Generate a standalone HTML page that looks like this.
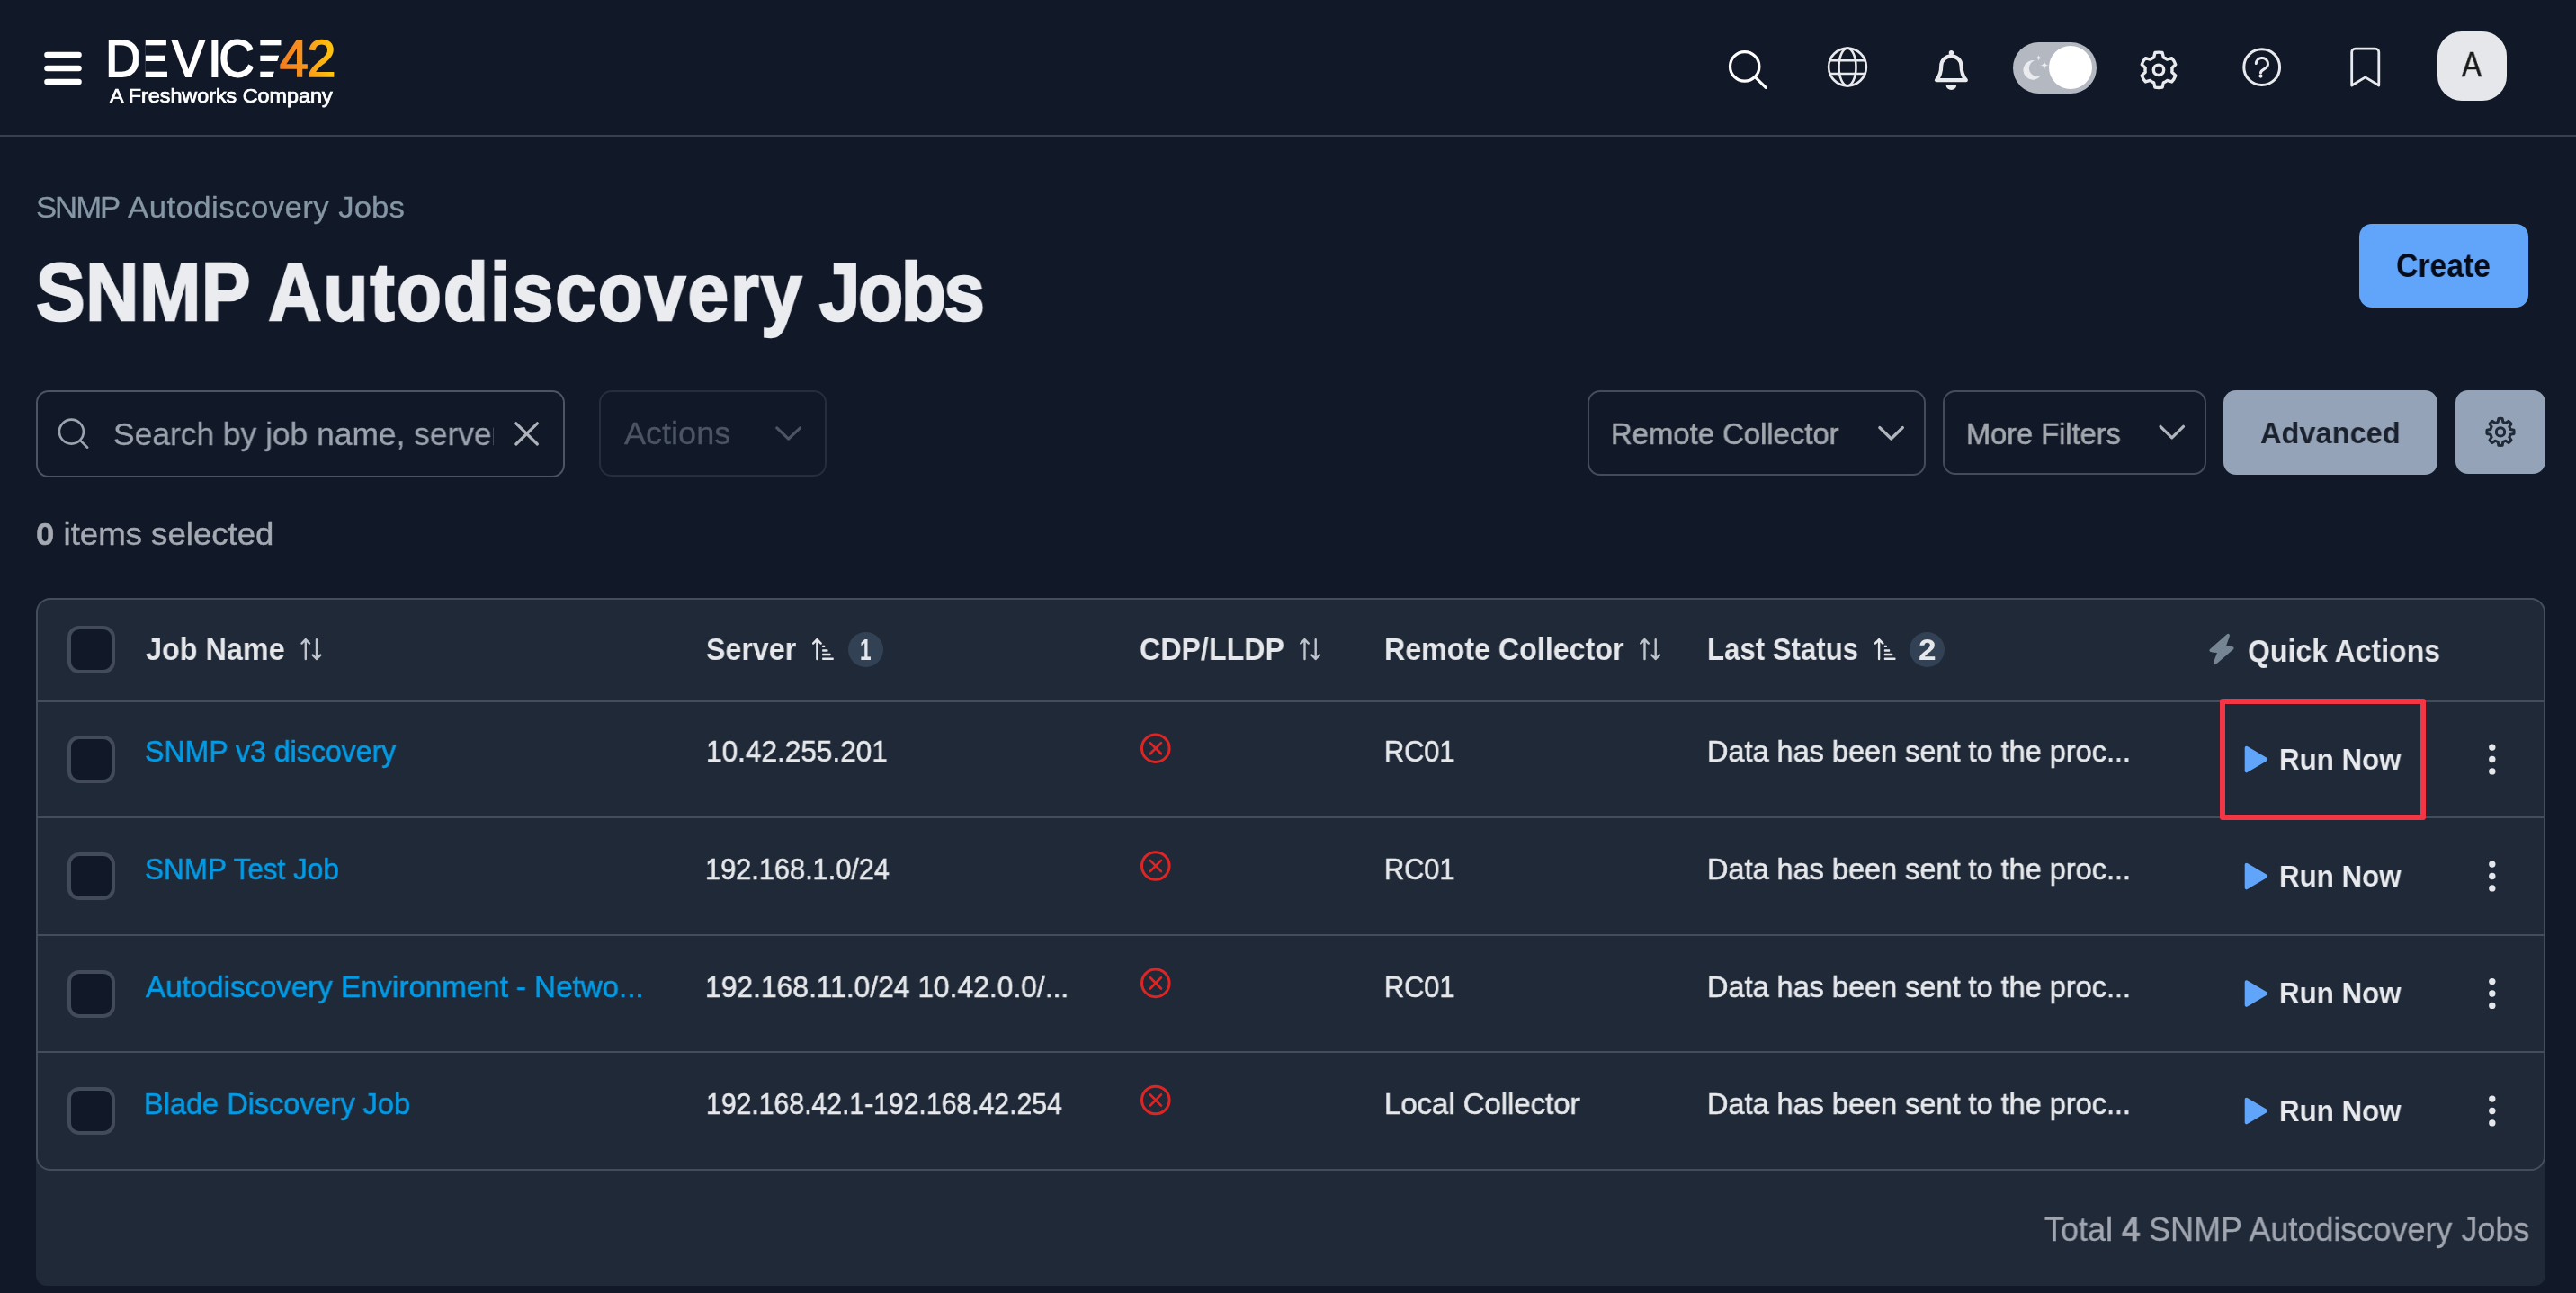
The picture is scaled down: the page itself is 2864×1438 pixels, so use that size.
<!DOCTYPE html>
<html lang="en">
<head>
<meta charset="utf-8">
<title>SNMP Autodiscovery Jobs - Device42</title>
<style>
html,body{margin:0;padding:0}
body{width:2864px;height:1438px;overflow:hidden;background:#111827;font-family:"Liberation Sans",sans-serif;position:relative;color:#e5e7eb}
.t{margin:0;padding:0;text-decoration:none;will-change:transform;position:absolute;white-space:nowrap;line-height:1;transform-origin:0 0;display:block}
.t b{font-weight:700}
.a{position:absolute;box-sizing:border-box}
svg{position:absolute;overflow:visible}
.hdrline{left:0;top:150px;width:2864px;height:2px;background:#393f4d}
.box{border:2px solid #444c5a;border-radius:14px;background:#111827}
.btn{border-radius:14px}
.panel{left:40px;top:665px;width:2790px;height:765px;background:#1f2937;border-radius:16px 16px 12px 12px}
.tbl{left:40px;top:665px;width:2790px;height:637px;border:2px solid #444d5c;border-radius:16px}
.hl{left:42px;width:2786px;height:2px;background:#444d5c}
.cb{left:75px;width:53px;height:53px;border:4px solid #414b5a;border-radius:13px;background:#111827}
.badge{width:39px;height:39px;border-radius:50%;background:#334155}
</style>
</head>
<body>
<header>
<div class="a hdrline"></div>
<!-- hamburger -->
<svg width="60" height="50" style="left:40px;top:50px" viewBox="40 50 60 50"><g stroke="#fff" stroke-width="6.6" stroke-linecap="round"><path d="M52.5 61H87.5M52.5 76H87.5M52.5 91H87.5"/></g></svg>
<svg width="300" height="70" style="left:100px;top:30px" viewBox="100 30 300 70" font-family="Liberation Sans, sans-serif" font-size="57.5"><defs><linearGradient id="lg42" x1="311" y1="0" x2="371" y2="0" gradientUnits="userSpaceOnUse" gradientTransform="scale(1 1)"><stop offset="0" stop-color="#f47a20"/><stop offset="0.45" stop-color="#f7941d"/><stop offset="1" stop-color="#ffc60b"/></linearGradient></defs><text transform="scale(0.95 1)" y="84.9" x="123.31 158.96 201.3 243.49 256.35 293.28" fill="#fff" stroke="#fff" stroke-width="1.9">DEVICE</text><path d="M153.89 38H161.74V92H153.89ZM281.49 38H289.34V92H281.49ZM316.6 40H319V88H302.4Z" fill="#111827"/><text transform="scale(1.0 1)" y="84.9" x="310.69 341.41" fill="url(#lg42)" stroke="url(#lg42)" stroke-width="1.5">42</text></svg>
<div class="a" style="left:2238px;top:47px;width:93px;height:57px;border-radius:29px;background:#b3b8c1"></div>
<div class="a" style="left:2278px;top:51px;width:48px;height:48px;border-radius:50%;background:#fff"></div>
<div class="a" style="left:2710px;top:35px;width:77px;height:76.5px;border-radius:27px;background:#e5e7eb"></div>
<svg width="2864" height="150" style="left:0;top:0" viewBox="0 0 2864 150" fill="none" stroke-linecap="round" stroke-linejoin="round"><g stroke="#fff" stroke-width="3.2"><circle cx="1939.7" cy="73.9" r="16.2"/><path d="M1951.3 85.6L1963.2 97.3"/></g><g stroke="#e8eaee" stroke-width="2.6"><circle cx="2054" cy="74.5" r="20.9"/><ellipse cx="2054" cy="74.5" rx="9.5" ry="20.9"/><path d="M2034.6 67.2H2073.4M2034.6 82H2073.4"/></g><g stroke="#e8eaee" stroke-width="4.2"><path d="M2153 89.2H2185.8C2181.5 84 2180.6 79 2180.6 73.5A11.2 11.2 0 0 0 2158.2 73.5C2158.2 79 2157.3 84 2153 89.2Z"/></g><circle cx="2169.4" cy="58.8" r="2.7" fill="#e8eaee"/><path d="M2163.6 94.4H2175.2A5.8 5.6 0 0 1 2163.6 94.4Z" fill="#e8eaee"/><path d="M2261.8 67.2A10.8 10.8 0 1 0 2268.6 84.6A9.2 9.2 0 0 1 2261.8 67.2Z" fill="#e9ebef"/><path d="M2266.6 60.5Q2266.6 64.3 2270.4 64.3Q2266.6 64.3 2266.6 68.1Q2266.6 64.3 2262.8 64.3Q2266.6 64.3 2266.6 60.5Z" fill="#e9ebef"/><path d="M2273 67.2Q2273 72.6 2278.4 72.6Q2273 72.6 2273 78Q2273 72.6 2267.6 72.6Q2273 72.6 2273 67.2Z" fill="#e9ebef"/><g stroke="#e8eaee" stroke-width="3.4"><path d="M2405.38 63.8L2404.1 58.53A19.7 19.7 0 0 0 2395.9 58.53L2394.62 63.8A15 15 0 0 0 2390.56 66.14L2385.36 64.62A19.7 19.7 0 0 0 2381.26 71.71L2385.18 75.45A15 15 0 0 0 2385.18 80.15L2381.26 83.89A19.7 19.7 0 0 0 2385.36 90.98L2390.56 89.46A15 15 0 0 0 2394.62 91.8L2395.9 97.07A19.7 19.7 0 0 0 2404.1 97.07L2405.38 91.8A15 15 0 0 0 2409.44 89.46L2414.64 90.98A19.7 19.7 0 0 0 2418.74 83.89L2414.82 80.15A15 15 0 0 0 2414.82 75.45L2418.74 71.71A19.7 19.7 0 0 0 2414.64 64.62L2409.44 66.14A15 15 0 0 0 2405.38 63.8Z"/><circle cx="2400" cy="77.8" r="5.7"/></g><g stroke="#e8eaee" stroke-width="3"><circle cx="2514.7" cy="74.7" r="19.9"/><path d="M2508.3 70.6A6.6 6.3 0 1 1 2517.6 76.6C2514.6 78.3 2513.5 79.2 2513.5 81"/></g><circle cx="2513.5" cy="84.6" r="2.1" fill="#e8eaee"/><path d="M2614.7 95V58.1A4 4 0 0 1 2618.7 54.1H2640.8A4 4 0 0 1 2644.8 58.1V95L2629.75 85.9Z" stroke="#e8eaee" stroke-width="2.8" stroke-linejoin="round"/></svg>
</header>
<main>
<div class="a btn" style="left:2623px;top:249px;width:188px;height:93px;background:#60a5fa"></div>
<div class="a box" style="left:40px;top:434px;width:588px;height:97px;border-color:#4b5563"></div>
<div class="a box" style="left:666px;top:434px;width:253px;height:96px;border-color:#252e3d"></div>
<div class="a box" style="left:1765px;top:434px;width:376px;height:95px"></div>
<div class="a box" style="left:2160px;top:434px;width:293px;height:93.5px"></div>
<div class="a btn" style="left:2472px;top:434px;width:238px;height:94px;background:#94a3b8"></div>
<div class="a btn" style="left:2730px;top:434px;width:100px;height:93.3px;background:#94a3b8"></div>
<svg width="2864" height="120" style="left:0;top:420px" viewBox="0 420 2864 120" fill="none" stroke-linecap="round" stroke-linejoin="round"><g stroke="#9ca3af" stroke-width="2.6"><circle cx="79.4" cy="480.1" r="13.5"/><path d="M89.2 489.8L97.2 497.7"/></g><path d="M573.8 470.8L597.4 494M597.4 470.8L573.8 494" stroke="#aeb2ba" stroke-width="3.2"/><path d="M863.7 475.9L876.65 488.1L889.6 475.9" stroke="#4b5563" stroke-width="3.2"/><path d="M2089.8 475.5L2102.6 488L2115.4 475.5" stroke="#b0b4bb" stroke-width="3.2"/><path d="M2402 474.3L2414.75 486.9L2427.5 474.3" stroke="#b0b4bb" stroke-width="3.2"/><g stroke="#1f2937" stroke-width="3"><path d="M2782.85 469.36L2782.1 465.45A15.1 15.1 0 0 0 2777.9 465.45L2777.15 469.36A11.4 11.4 0 0 0 2774.21 470.58L2770.91 468.34A15.1 15.1 0 0 0 2767.94 471.31L2770.18 474.61A11.4 11.4 0 0 0 2768.96 477.55L2765.05 478.3A15.1 15.1 0 0 0 2765.05 482.5L2768.96 483.25A11.4 11.4 0 0 0 2770.18 486.19L2767.94 489.49A15.1 15.1 0 0 0 2770.91 492.46L2774.21 490.22A11.4 11.4 0 0 0 2777.15 491.44L2777.9 495.35A15.1 15.1 0 0 0 2782.1 495.35L2782.85 491.44A11.4 11.4 0 0 0 2785.79 490.22L2789.09 492.46A15.1 15.1 0 0 0 2792.06 489.49L2789.82 486.19A11.4 11.4 0 0 0 2791.04 483.25L2794.95 482.5A15.1 15.1 0 0 0 2794.95 478.3L2791.04 477.55A11.4 11.4 0 0 0 2789.82 474.61L2792.06 471.31A15.1 15.1 0 0 0 2789.09 468.34L2785.79 470.58A11.4 11.4 0 0 0 2782.85 469.36Z"/><circle cx="2780" cy="480.4" r="4.7"/></g></svg>
<div class="a panel"></div>
<div class="a tbl"></div>
<div class="a hl" style="top:779px"></div>
<div class="a hl" style="top:908px"></div>
<div class="a hl" style="top:1039px"></div>
<div class="a hl" style="top:1169px"></div>
<div class="a cb" style="top:696px"></div>
<div class="a cb" style="top:818.0px"></div>
<div class="a cb" style="top:948.0px"></div>
<div class="a cb" style="top:1078.5px"></div>
<div class="a cb" style="top:1209.0px"></div>
<div class="a badge" style="left:943px;top:703px"></div>
<div class="a badge" style="left:2123.3px;top:703px"></div>
<svg width="2864" height="780" style="left:0;top:660px" viewBox="0 660 2864 780"><path d="M339.8 711.2V733M335.5 715.6L339.8 711.2L344.1 715.6M352 711.2V733M347.7 728.6L352 733L356.3 728.6" stroke="#bfc4cc" stroke-width="2.4" fill="none" stroke-linecap="round" stroke-linejoin="round"/><path d="M908.4 711.2V733M904.1 715.6L908.4 711.2L912.7 715.6" stroke="#e5e7eb" stroke-width="2.4" fill="none" stroke-linecap="round" stroke-linejoin="round"/><rect x="914.1" y="717.7" width="3.1" height="2.4" rx="0.6" fill="#e5e7eb"/><rect x="914.1" y="722.3" width="6.4" height="2.4" rx="0.6" fill="#e5e7eb"/><rect x="914.1" y="726.8" width="9.5" height="2.4" rx="0.6" fill="#e5e7eb"/><rect x="914.1" y="731.5" width="12.7" height="2.4" rx="0.6" fill="#e5e7eb"/><path d="M1450.5 711.2V733M1446.2 715.6L1450.5 711.2L1454.8 715.6M1462.7 711.2V733M1458.4 728.6L1462.7 733L1467 728.6" stroke="#bfc4cc" stroke-width="2.4" fill="none" stroke-linecap="round" stroke-linejoin="round"/><path d="M1828.5 711.2V733M1824.2 715.6L1828.5 711.2L1832.8 715.6M1840.7 711.2V733M1836.4 728.6L1840.7 733L1845 728.6" stroke="#bfc4cc" stroke-width="2.4" fill="none" stroke-linecap="round" stroke-linejoin="round"/><path d="M2089.1 711.2V733M2084.8 715.6L2089.1 711.2L2093.4 715.6" stroke="#e5e7eb" stroke-width="2.4" fill="none" stroke-linecap="round" stroke-linejoin="round"/><rect x="2094.8" y="717.7" width="3.1" height="2.4" rx="0.6" fill="#e5e7eb"/><rect x="2094.8" y="722.3" width="6.4" height="2.4" rx="0.6" fill="#e5e7eb"/><rect x="2094.8" y="726.8" width="9.5" height="2.4" rx="0.6" fill="#e5e7eb"/><rect x="2094.8" y="731.5" width="12.7" height="2.4" rx="0.6" fill="#e5e7eb"/><path d="M2477.2 706.6L2458.2 723.3Q2462 724.6 2467.6 724.2L2462.6 737.4L2481.8 721Q2478 719.8 2472.6 720.2Z" fill="#758593" stroke="#758593" stroke-width="3.6" stroke-linejoin="round"/><g stroke="#dc2626" fill="none" stroke-linecap="round"><circle cx="1284.8" cy="832.2" r="15.3" stroke-width="3"/><path d="M1278.8 826.1L1291 838.3M1291 826.1L1278.8 838.3" stroke-width="2.7"/></g><path d="M2497.6 831.6L2519.2 844.5L2497.6 857.4Z" fill="#60a5fa" stroke="#60a5fa" stroke-width="3.8" stroke-linejoin="round"/><circle cx="2770.8" cy="831.1" r="3.7" fill="#e5e7eb"/><circle cx="2770.8" cy="844.5" r="3.7" fill="#e5e7eb"/><circle cx="2770.8" cy="857.9" r="3.7" fill="#e5e7eb"/><g stroke="#dc2626" fill="none" stroke-linecap="round"><circle cx="1284.8" cy="963" r="15.3" stroke-width="3"/><path d="M1278.8 956.9L1291 969.1M1291 956.9L1278.8 969.1" stroke-width="2.7"/></g><path d="M2497.6 961.6L2519.2 974.5L2497.6 987.4Z" fill="#60a5fa" stroke="#60a5fa" stroke-width="3.8" stroke-linejoin="round"/><circle cx="2770.8" cy="961.1" r="3.7" fill="#e5e7eb"/><circle cx="2770.8" cy="974.5" r="3.7" fill="#e5e7eb"/><circle cx="2770.8" cy="987.9" r="3.7" fill="#e5e7eb"/><g stroke="#dc2626" fill="none" stroke-linecap="round"><circle cx="1284.8" cy="1093.4" r="15.3" stroke-width="3"/><path d="M1278.8 1087.3L1291 1099.5M1291 1087.3L1278.8 1099.5" stroke-width="2.7"/></g><path d="M2497.6 1092.1L2519.2 1105L2497.6 1117.9Z" fill="#60a5fa" stroke="#60a5fa" stroke-width="3.8" stroke-linejoin="round"/><circle cx="2770.8" cy="1091.6" r="3.7" fill="#e5e7eb"/><circle cx="2770.8" cy="1105" r="3.7" fill="#e5e7eb"/><circle cx="2770.8" cy="1118.4" r="3.7" fill="#e5e7eb"/><g stroke="#dc2626" fill="none" stroke-linecap="round"><circle cx="1284.8" cy="1223.5" r="15.3" stroke-width="3"/><path d="M1278.8 1217.4L1291 1229.6M1291 1217.4L1278.8 1229.6" stroke-width="2.7"/></g><path d="M2497.6 1222.6L2519.2 1235.5L2497.6 1248.4Z" fill="#60a5fa" stroke="#60a5fa" stroke-width="3.8" stroke-linejoin="round"/><circle cx="2770.8" cy="1222.1" r="3.7" fill="#e5e7eb"/><circle cx="2770.8" cy="1235.5" r="3.7" fill="#e5e7eb"/><circle cx="2770.8" cy="1248.9" r="3.7" fill="#e5e7eb"/></svg>
<div class="a" style="left:2468.4px;top:776.7px;width:229px;height:135.5px;border:6px solid #f23645;border-radius:3px"></div>
</main>
<span class="t" style="left:121.6px;top:97.0px;font-size:21.5px;font-weight:400;color:#ffffff;-webkit-text-stroke:0.75px;transform:scaleX(1.0849);">A Freshworks Company</span>
<span class="t" style="left:39.6px;top:214.0px;font-size:33.5px;font-weight:400;color:#8596a5;-webkit-text-stroke:0.3px;transform:scaleX(1.0381);"><span style="letter-spacing:-2.0px">SNMP</span><span style="letter-spacing:0.2px"> </span><span style="letter-spacing:0.42px">Autodiscovery</span><span style="letter-spacing:0.5px"> </span><span style="letter-spacing:0px">Jobs</span></span>
<h1 class="t" style="left:39.6px;top:280.0px;font-size:90.5px;font-weight:700;color:#ebecf0;-webkit-text-stroke:2.4px;transform:scaleX(0.9048);"><span style="letter-spacing:0.75px">SNMP</span><span style="letter-spacing:-4.2px"> </span><span style="letter-spacing:2.25px">Autodiscovery</span><span style="letter-spacing:-6px"> </span><span style="letter-spacing:-2.6px">Jobs</span></h1>
<span class="t" style="left:2663.8px;top:278.0px;font-size:36px;font-weight:700;color:#060b19;transform:scaleX(0.9372);">Create</span>
<div class="a" style="left:120px;top:440px;width:428.7px;height:80px;overflow:hidden"><span class="t" style="left:5.6px;top:26.0px;font-size:35.5px;font-weight:400;color:#9ca3af;-webkit-text-stroke:0.3px;transform:scaleX(0.9961);">Search by job name, server</span></div>
<span class="t" style="left:693.6px;top:464.0px;font-size:35px;font-weight:400;color:#4b5563;-webkit-text-stroke:0.3px;transform:scaleX(1.0299);">Actions</span>
<span class="t" style="left:1791.2px;top:465.0px;font-size:34px;font-weight:400;color:#a3a7ae;-webkit-text-stroke:0.6px;transform:scaleX(0.9656);">Remote Collector</span>
<span class="t" style="left:2185.8px;top:465.0px;font-size:34px;font-weight:400;color:#a3a7ae;-webkit-text-stroke:0.6px;transform:scaleX(0.9574);">More Filters</span>
<span class="t" style="left:2513.0px;top:464.0px;font-size:34px;font-weight:700;color:#1a202c;transform:scaleX(0.9579);">Advanced</span>
<span class="t" style="left:39.6px;top:577.0px;font-size:34.5px;font-weight:400;color:#a5a9b2;-webkit-text-stroke:0.45px;transform:scaleX(1.0607);"><b>0</b> items selected</span>
<span class="t" style="left:162.0px;top:705.0px;font-size:34.5px;font-weight:700;color:#e5e7eb;transform:scaleX(0.9376);">Job Name</span>
<span class="t" style="left:784.8px;top:705.0px;font-size:34.5px;font-weight:700;color:#e5e7eb;transform:scaleX(0.9328);">Server</span>
<span class="t" style="left:1266.6px;top:705.0px;font-size:34.5px;font-weight:700;color:#e5e7eb;transform:scaleX(0.9334);">CDP/LLDP</span>
<span class="t" style="left:1538.6px;top:705.0px;font-size:34.5px;font-weight:700;color:#e5e7eb;transform:scaleX(0.9327);">Remote Collector</span>
<span class="t" style="left:1898.0px;top:705.0px;font-size:34.5px;font-weight:700;color:#e5e7eb;transform:scaleX(0.9036);">Last Status</span>
<span class="t" style="left:2498.6px;top:707.0px;font-size:34.5px;font-weight:700;color:#e5e7eb;transform:scaleX(0.9277);">Quick Actions</span>
<span class="t" style="left:955.5px;top:705.0px;font-size:34px;font-weight:700;color:#e5e7eb;transform:scaleX(0.6657);">1</span>
<span class="t" style="left:2132.9px;top:705.0px;font-size:34px;font-weight:700;color:#e5e7eb;transform:scaleX(1.0357);">2</span>
<a href="#" class="t" style="left:161.2px;top:818.0px;font-size:34px;font-weight:400;color:#039be5;-webkit-text-stroke:0.6px;transform:scaleX(0.9432);">SNMP v3 discovery</a>
<span class="t" style="left:785.2px;top:818.0px;font-size:34px;font-weight:400;color:#e6e8eb;-webkit-text-stroke:0.6px;transform:scaleX(0.9283);">10.42.255.201</span>
<span class="t" style="left:1538.6px;top:818.0px;font-size:34px;font-weight:400;color:#e6e8eb;-webkit-text-stroke:0.6px;transform:scaleX(0.9024);">RC01</span>
<span class="t" style="left:1898.0px;top:818.0px;font-size:34px;font-weight:400;color:#e6e8eb;-webkit-text-stroke:0.6px;transform:scaleX(0.9548);">Data has been sent to the proc...</span>
<span class="t" style="left:2534.2px;top:827.0px;font-size:34px;font-weight:700;color:#e8eaed;transform:scaleX(0.9206);">Run Now</span>
<a href="#" class="t" style="left:161.2px;top:949.0px;font-size:34px;font-weight:400;color:#039be5;-webkit-text-stroke:0.6px;transform:scaleX(0.9260);">SNMP Test Job</a>
<span class="t" style="left:784.0px;top:949.0px;font-size:34px;font-weight:400;color:#e6e8eb;-webkit-text-stroke:0.6px;transform:scaleX(0.9036);">192.168.1.0/24</span>
<span class="t" style="left:1538.6px;top:949.0px;font-size:34px;font-weight:400;color:#e6e8eb;-webkit-text-stroke:0.6px;transform:scaleX(0.9024);">RC01</span>
<span class="t" style="left:1898.0px;top:949.0px;font-size:34px;font-weight:400;color:#e6e8eb;-webkit-text-stroke:0.6px;transform:scaleX(0.9548);">Data has been sent to the proc...</span>
<span class="t" style="left:2534.2px;top:957.0px;font-size:34px;font-weight:700;color:#e8eaed;transform:scaleX(0.9206);">Run Now</span>
<a href="#" class="t" style="left:162.2px;top:1080.0px;font-size:34px;font-weight:400;color:#039be5;-webkit-text-stroke:0.6px;transform:scaleX(0.9733);">Autodiscovery Environment - Netwo...</a>
<span class="t" style="left:784.0px;top:1080.0px;font-size:34px;font-weight:400;color:#e6e8eb;-webkit-text-stroke:0.6px;transform:scaleX(0.9351);">192.168.11.0/24 10.42.0.0/...</span>
<span class="t" style="left:1538.6px;top:1080.0px;font-size:34px;font-weight:400;color:#e6e8eb;-webkit-text-stroke:0.6px;transform:scaleX(0.9024);">RC01</span>
<span class="t" style="left:1898.0px;top:1080.0px;font-size:34px;font-weight:400;color:#e6e8eb;-webkit-text-stroke:0.6px;transform:scaleX(0.9548);">Data has been sent to the proc...</span>
<span class="t" style="left:2534.2px;top:1087.0px;font-size:34px;font-weight:700;color:#e8eaed;transform:scaleX(0.9206);">Run Now</span>
<a href="#" class="t" style="left:160.2px;top:1210.0px;font-size:34px;font-weight:400;color:#039be5;-webkit-text-stroke:0.6px;transform:scaleX(0.9552);">Blade Discovery Job</a>
<span class="t" style="left:785.0px;top:1210.0px;font-size:34px;font-weight:400;color:#e6e8eb;-webkit-text-stroke:0.6px;transform:scaleX(0.8871);">192.168.42.1-192.168.42.254</span>
<span class="t" style="left:1538.6px;top:1210.0px;font-size:34px;font-weight:400;color:#e6e8eb;-webkit-text-stroke:0.6px;transform:scaleX(0.9668);">Local Collector</span>
<span class="t" style="left:1898.0px;top:1210.0px;font-size:34px;font-weight:400;color:#e6e8eb;-webkit-text-stroke:0.6px;transform:scaleX(0.9548);">Data has been sent to the proc...</span>
<span class="t" style="left:2534.2px;top:1218.0px;font-size:34px;font-weight:700;color:#e8eaed;transform:scaleX(0.9206);">Run Now</span>
<span class="t" style="left:2273.4px;top:1350.0px;font-size:36.5px;font-weight:400;color:#a1a6b0;-webkit-text-stroke:0.35px;transform:scaleX(0.9859);">Total <b>4</b> SNMP Autodiscovery Jobs</span>
<span class="t" style="left:2737.2px;top:53.0px;font-size:38.7px;font-weight:400;color:#1a1a1a;-webkit-text-stroke:0.5px;transform:scaleX(0.8523);">A</span>
</body>
</html>
